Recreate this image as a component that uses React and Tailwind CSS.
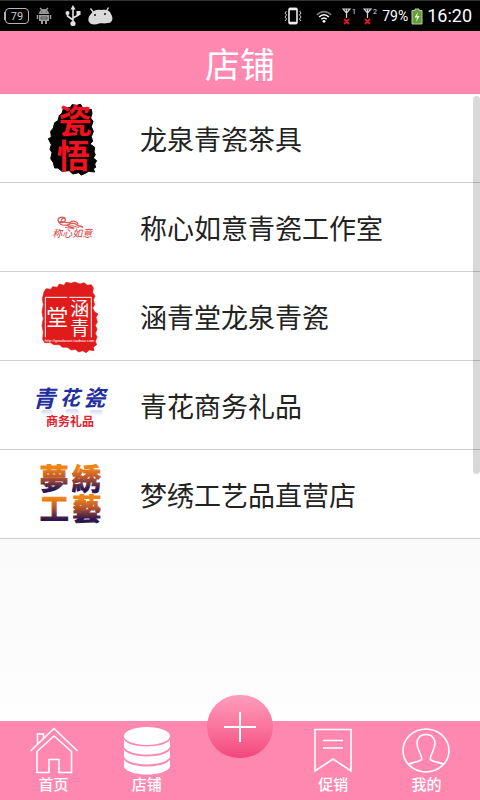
import React, { useState } from "react";

function LogoCiwu() {
  return (
    <svg viewBox="0 -6 270 264" className="w-[90px] h-[88px] shrink-0" aria-hidden="true">
      <path
        d="M96 52 L100 38 L122 34 L126 26 L140 28 L152 25 L158 36 L170 42 L184 40 L186 52 L182 66 L189 76 L184 92 L190 106
           L184 122 L188 136 L180 144 L194 154 L192 168 L196 176 L190 186 L200 194 L194 204 L197 214 L190 218 L194 228
           L176 226 L166 232 L154 237 L146 230 L128 234 L118 224 L96 226 L84 216 L74 216 L70 200 L62 188 L66 170
           L60 160 L64 146 L55 128 L64 124 L62 106 L70 96 L74 80 L84 74 L88 58 Z"
        fill="#000"
        stroke="#000"
        strokeWidth="3"
        strokeLinejoin="round"
      />
      <g fill="#f5101f" fontWeight="700" textAnchor="middle">
        <text x="136" y="112" fontSize="99">瓷</text>
        <text x="130" y="217" fontSize="99">悟</text>
      </g>
    </svg>
  );
}

function LogoRuyi() {
  return (
    <svg viewBox="0 -3 270 264" className="w-[90px] h-[88px] shrink-0" aria-hidden="true">
      <g fill="none" stroke="#dd5a5a" strokeWidth="4" strokeLinecap="round">
        <path d="M104 101 C92 96 80 104 86 112 C92 120 108 114 106 105 C104 100 94 104 94 109" />
        <path d="M86 114 C94 128 104 122 112 124 C118 128 122 133 132 132" />
        <path d="M92 113 C104 112 112 120 120 115 C130 108 140 113 144 120" />
        <path d="M112 124 C122 117 132 116 140 122 C148 128 152 124 158 130" />
        <path d="M120 126 C130 122 134 130 146 130 M106 130 C116 134 124 130 130 134" strokeWidth="3" />
      </g>
      <text x="127" y="159" fontSize="30" fontStyle="italic" fill="#dc3a3e" textAnchor="middle">
        称心如意
      </text>
    </svg>
  );
}

function LogoHanqing() {
  return (
    <svg viewBox="0 0 270 264" className="w-[90px] h-[88px] shrink-0" aria-hidden="true">
      <path
        d="M42 60 L48 50 L62 52 L68 44 L82 46 L88 36 L102 40 L108 31 L124 34 L134 30 L150 36 L162 32 L172 40 L184 38
           L190 48 L188 62 L195 72 L190 84 L194 98 L188 108 L194 120 L204 126 L198 136 L202 150 L196 160 L201 172
           L196 184 L201 196 L196 208 L200 218 L190 226 L192 236 L178 234 L168 242 L158 236 L146 240 L136 232
           L124 234 L112 226 L98 226 L88 218 L72 218 L62 212 L44 212 L38 202 L40 180 L36 160 L40 140 L36 120
           L40 98 L37 80 Z"
        fill="#e01b1b"
        stroke="#e01b1b"
        strokeWidth="2"
        strokeLinejoin="round"
      />
      <path d="M46 196 V76 H112 M118 76 H184 V196" fill="none" stroke="#fff" strokeWidth="3" />
      <g fill="#fff" textAnchor="middle">
        <text x="82" y="160" fontSize="66">堂</text>
        <text x="149" y="131" fontSize="57">涵</text>
        <text x="149" y="190" fontSize="57">青</text>
        <text x="119" y="210" fontSize="12" className="font-['Liberation_Sans',sans-serif]">
          http://goodware.taobao.com
        </text>
      </g>
    </svg>
  );
}

function LogoQinghua() {
  return (
    <svg viewBox="0 3 270 264" className="w-[90px] h-[88px] shrink-0" aria-hidden="true">
      <defs>
        <linearGradient id="reflection" x1="0" y1="0" x2="0" y2="1">
          <stop offset="0" stopColor="#8fa2e0" stopOpacity="0.4" />
          <stop offset="1" stopColor="#8fa2e0" stopOpacity="0" />
        </linearGradient>
      </defs>
      <g fill="url(#reflection)">
        <rect x="34" y="150" width="34" height="18" rx="6" />
        <rect x="106" y="148" width="40" height="18" rx="6" />
        <rect x="180" y="150" width="38" height="18" rx="6" />
      </g>
      <g fill="#1f2f9f" fontWeight="700" fontStyle="italic" textAnchor="middle">
        <text x="42" y="140" fontSize="69">青</text>
        <text x="119" y="136" fontSize="60">花</text>
        <text x="193" y="137" fontSize="66">瓷</text>
      </g>
      <text x="120" y="199" fontSize="36" fontWeight="700" fill="#e0202a" textAnchor="middle">
        商务礼品
      </text>
    </svg>
  );
}

function LogoMengxiu() {
  return (
    <svg viewBox="0 0 270 264" className="w-[90px] h-[88px] shrink-0" aria-hidden="true">
      <defs>
        <linearGradient id="rowTop" gradientUnits="userSpaceOnUse" x1="0" y1="48" x2="0" y2="126">
          <stop offset="0.1" stopColor="#ee8418" />
          <stop offset="0.45" stopColor="#b8542c" />
          <stop offset="0.9" stopColor="#2c1550" />
        </linearGradient>
        <linearGradient id="rowBottom" gradientUnits="userSpaceOnUse" x1="0" y1="138" x2="0" y2="216">
          <stop offset="0.1" stopColor="#ee8418" />
          <stop offset="0.45" stopColor="#b8542c" />
          <stop offset="0.9" stopColor="#2c1550" />
        </linearGradient>
      </defs>
      <g fontSize="87" fontWeight="700" strokeWidth="3" textAnchor="middle">
        <g fill="url(#rowTop)" stroke="url(#rowTop)">
          <text x="72" y="120">夢</text>
          <text x="169" y="120">綉</text>
        </g>
        <g fill="url(#rowBottom)" stroke="url(#rowBottom)">
          <text x="73" y="210">工</text>
          <text x="170" y="210">藝</text>
        </g>
      </g>
    </svg>
  );
}

function Signal({ sim }) {
  return (
    <svg viewBox="0 0 15 18" className="w-[15px] h-[18px]" fill="none" aria-hidden="true">
      <path d="M1 2 H8 L4.500 6 Z M4.500 2 V11" stroke="#d4d4d4" strokeWidth="1.200" />
      <path d="M2 12 L7 17 M7 12 L2 17" stroke="#e01515" strokeWidth="1.800" />
      <text x="10" y="7" fontSize="7" fill="#e5e5e5">{sim}</text>
    </svg>
  );
}

function StatusBar() {
  return (
    <div className="flex items-center justify-between h-[31px] pl-1 pr-2 bg-black border-t border-[#333] text-white font-[Roboto,sans-serif]">
      <div className="flex items-center">
        <div className="flex items-center">
          <span className="w-px h-2 bg-[#aaa]" />
          <span className="flex items-center justify-center w-6 h-4 border border-[#b5b5b5] rounded-sm text-[11px] leading-none text-[#ccc]">
            79
          </span>
        </div>
        <svg viewBox="0 0 16 18" className="w-4 h-[18px] ml-[7px]" aria-hidden="true">
          <path d="M3 7 A5 5 0 0 1 13 7 Z M3 8 H13 V14 H11 V17 H9 V14 H7 V17 H5 V14 H3 Z" fill="#9c9c9c" />
          <path d="M4 1 L6 3 M12 1 L10 3 M1.500 8 V12 M14.500 8 V12" stroke="#9c9c9c" strokeWidth="1.500" />
          <path d="M5 5 H6.500 M9.500 5 H11 M5 10 H11 V12 H5 Z" stroke="#555" fill="none" />
        </svg>
        <svg viewBox="0 0 16 22" className="w-4 h-[22px] ml-[13px]" fill="none" aria-hidden="true">
          <path d="M8 4 V18 M2.500 8 V11 L8 15 M13.500 8 V10 L8 13" stroke="#e2e2e2" strokeWidth="1.600" />
          <path d="M8 0 L10.500 4.500 H5.500 Z M11.500 6 H15.500 V10 H11.500 Z" fill="#e2e2e2" />
          <circle cx="2.500" cy="8" r="2" fill="#e2e2e2" />
          <circle cx="8" cy="18.500" r="2.600" fill="#e2e2e2" />
        </svg>
        <svg viewBox="0 0 25 18" className="w-[25px] h-[18px] ml-[7px]" aria-hidden="true">
          <path d="M3 7 C5 3 9 2.500 13 3 C18 2 22 3 23 7 C26 12 24 16 20 16 C16 17 14 16 11 16.500 C7 18 2 18 0.500 14 C0 11 1 9 3 7 Z" fill="#dadada" />
          <path d="M2.500 1.500 L6 6 M20.500 0.500 L18.500 4" stroke="#dadada" strokeWidth="1.400" />
          <circle cx="7" cy="8" r="1" fill="#111" />
          <circle cx="17" cy="7" r="1" fill="#111" />
        </svg>
      </div>

      <div className="flex items-center">
        <svg viewBox="0 0 18 18" className="w-[18px] h-[18px]" fill="none" aria-hidden="true">
          <rect x="5" y="1.500" width="8" height="15" rx="1" stroke="#eee" strokeWidth="1.600" />
          <path d="M5 2 H13 M5 16 H13" stroke="#eee" strokeWidth="2.400" />
          <path d="M2.500 4 L1 6 L2.500 8 L1 10 L2.500 12 L1 14 M15.500 4 L17 6 L15.500 8 L17 10 L15.500 12 L17 14" stroke="#ccc" />
        </svg>
        <svg viewBox="0 0 16 13" className="w-4 h-[13px] ml-3.5" fill="none" aria-hidden="true">
          <path d="M1 5 C5 0.500 11 0.500 15 5" stroke="#777" strokeWidth="1.600" />
          <path d="M3.200 7 C6 4 10 4 12.800 7" stroke="#fff" strokeWidth="1.700" />
          <path d="M5.300 9.300 C7 7.600 9 7.600 10.700 9.300" stroke="#fff" strokeWidth="1.600" />
          <circle cx="8" cy="11.300" r="1.400" fill="#fff" />
        </svg>
        <div className="flex gap-1.5 ml-2.5">
          <Signal sim="1" />
          <Signal sim="2" />
        </div>
        <span className="ml-1 text-sm leading-none">79%</span>
        <svg viewBox="0 0 12 17" className="w-3 h-[17px] ml-[3px]" aria-hidden="true">
          <path d="M4 1 H8 V2.500 H11 V16 H1 V2.500 H4 Z" fill="#5fa02e" stroke="#c4c4c4" />
          <path d="M7 4 L3.500 9.500 H6 L5 14 L8.700 8 H6.200 Z" fill="#f0f7e8" />
        </svg>
        <time className="ml-1 text-lg leading-none">16:20</time>
      </div>
    </div>
  );
}

function HomeIcon() {
  return (
    <svg viewBox="0 0 50 50" className="w-[50px] h-[50px]" fill="none" stroke="#fff" strokeWidth="1.600" aria-hidden="true">
      <path d="M1.500 25 L25 2.500 L48.500 25 M8.500 18 V8 H14.500 V12.500" />
      <path d="M8 25.500 L25 10 L42.500 25.500 V46.500 H30 V33.500 H20 V46.500 H8 Z" />
    </svg>
  );
}

function ShopIcon() {
  return (
    <svg viewBox="0 0 50 50" className="w-[50px] h-[50px]" fill="#fff" aria-hidden="true">
      <ellipse cx="25" cy="10" rx="23" ry="9" />
      <path d="M2 13.500 C7 22.800 43 22.800 48 13.500 V21 C43 31 7 31 2 21 Z" />
      <path d="M2 23.500 C7 32.800 43 32.800 48 23.500 V31 C43 41 7 41 2 31 Z" />
      <path d="M2 33.500 C7 42.800 43 42.800 48 33.500 V41 C43 51 7 51 2 41 Z" />
    </svg>
  );
}

function PromoIcon() {
  return (
    <svg viewBox="0 0 50 50" className="w-[50px] h-[50px]" fill="none" stroke="#fff" strokeWidth="1.600" aria-hidden="true">
      <path d="M7 3.500 H43 V45 L25 33 L7 45 Z M15 14.500 H35 M15 22 H35" />
    </svg>
  );
}

function MineIcon() {
  return (
    <svg viewBox="0 0 50 50" className="w-[50px] h-[50px]" fill="none" stroke="#fff" strokeWidth="1.600" aria-hidden="true">
      <ellipse cx="25" cy="24.500" rx="23" ry="21.500" />
      <path d="M7 38.500 C11 36 19 36 20.500 33.500 C21.500 31 19 28 18 25 C15.500 20 15.500 14 18 11.500 C21 7.500 29 7.500 32 11.500 C34.500 14 34.500 20 32 25 C31 28 28.500 31 29.500 33.500 C31 36 39 36 43 38.500" />
    </svg>
  );
}

const shops = [
  { name: "龙泉青瓷茶具", Logo: LogoCiwu },
  { name: "称心如意青瓷工作室", Logo: LogoRuyi },
  { name: "涵青堂龙泉青瓷", Logo: LogoHanqing },
  { name: "青花商务礼品", Logo: LogoQinghua },
  { name: "梦绣工艺品直营店", Logo: LogoMengxiu },
];

function Tab({ label, Icon, active, onClick }) {
  return (
    <button
      type="button"
      onClick={onClick}
      aria-current={active ? "page" : undefined}
      className="flex flex-col items-center justify-start pt-[5px] text-[15px] leading-4 font-medium"
    >
      <Icon />
      {label}
    </button>
  );
}

export default function App() {
  const [tab, setTab] = useState("shop");

  return (
    <div
      lang="zh-CN"
      className="flex flex-col min-h-screen bg-[#fcfcfc] font-['Noto_Sans_CJK_SC',sans-serif]"
    >
      <StatusBar />

      <header className="flex items-center justify-center h-[63px] bg-[#ff88b0] text-white">
        <h1 className="text-[35px] leading-none">店铺</h1>
      </header>

      <main className="relative flex-1 bg-linear-to-b from-[#eeeeee] to-[#fefefe]">
        <ul className="bg-white">
          {shops.map(({ name, Logo }) => (
            <li key={name} className="border-b border-[#cfcfcf]">
              <a href="#" className="flex items-center gap-5 pl-[30px] pr-4 text-[27px] leading-none text-[#222]">
                <Logo />
                {name}
              </a>
            </li>
          ))}
        </ul>
        {/* scroll indicator */}
        <div className="absolute right-0 top-0.5 w-[7px] h-[378px] rounded-full bg-black/15" />
      </main>

      <nav className="grid grid-cols-5 h-[79px] px-[7px] bg-[#ff88b0] text-white">
        <Tab label="首页" Icon={HomeIcon} active={tab === "home"} onClick={() => setTab("home")} />
        <Tab label="店铺" Icon={ShopIcon} active={tab === "shop"} onClick={() => setTab("shop")} />
        <div className="relative">
          <button
            type="button"
            aria-label="添加"
            className="absolute left-1/2 -top-[26px] -translate-x-1/2 flex items-center justify-center w-[66px] h-[63px] rounded-full bg-linear-to-b from-[#ff9dbd] to-[#f2457f]"
          >
            <svg viewBox="0 0 32 32" className="w-8 h-8" stroke="#fff" strokeWidth="2" aria-hidden="true">
              <path d="M16 1 V31 M0 16 H32" />
            </svg>
          </button>
        </div>
        <Tab label="促销" Icon={PromoIcon} active={tab === "promo"} onClick={() => setTab("promo")} />
        <Tab label="我的" Icon={MineIcon} active={tab === "mine"} onClick={() => setTab("mine")} />
      </nav>
    </div>
  );
}
